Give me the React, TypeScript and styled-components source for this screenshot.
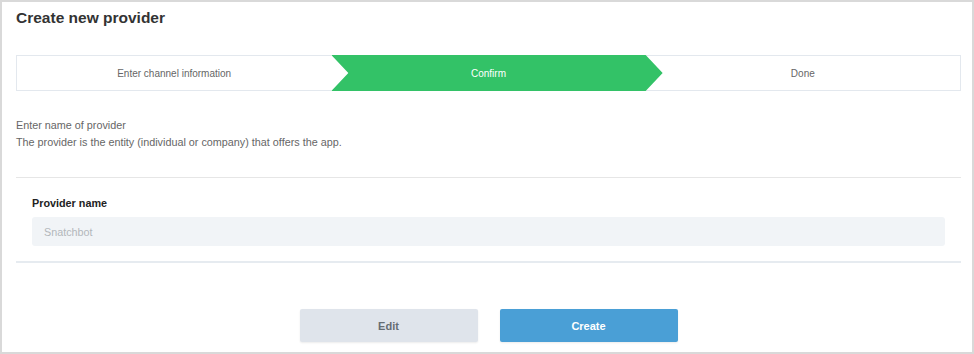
import React from "react";
import styled, { createGlobalStyle } from "styled-components";

const GlobalStyle = createGlobalStyle`
  html, body {
    margin: 0;
    padding: 0;
    background: #ffffff;
  }
  body {
    font-family: "Liberation Sans", Arial, sans-serif;
  }
`;

const steps = ["Enter channel information", "Confirm", "Done"];

const App = () => {
  return (
    <>
      <GlobalStyle />
      <Frame>
        <Title>Create new provider</Title>

        <Stepper>
          {steps.map((label, i) => (
            <Step
              key={label}
              $active={i === 1}
              $first={i === 0}
              $last={i === steps.length - 1}
            >
              {label}
            </Step>
          ))}
        </Stepper>

        <Intro>
          <p>Enter name of provider</p>
          <p>The provider is the entity (individual or company) that offers the app.</p>
        </Intro>

        <FieldSection>
          <Label htmlFor="provider-name">Provider name</Label>
          <Input id="provider-name" placeholder="Snatchbot" readOnly />
        </FieldSection>

        <Actions>
          <Button $variant="secondary">Edit</Button>
          <Button $variant="primary">Create</Button>
        </Actions>
      </Frame>
    </>
  );
};

export default App;

const Frame = styled.div`
  box-sizing: border-box;
  width: 974px;
  height: 354px;
  overflow: hidden;
  border: 2px solid #d9d9d9;
  padding: 6px 11px 0 14px;
  background: #fff;
`;

const Title = styled.h1`
  margin: 0;
  font-size: 15.5px;
  line-height: 20px;
  font-weight: 700;
  color: #333;
`;

const Stepper = styled.div`
  display: flex;
  height: 36px;
  margin-top: 27px;
`;

const ARROW = 17;

const Step = styled.div<{ $active: boolean; $first: boolean; $last: boolean }>`
  flex: 1 1 0;
  display: flex;
  align-items: center;
  justify-content: center;
  font-size: 10px;
  color: ${(p) => (p.$active ? "#fff" : "#666")};
  box-sizing: border-box;
  border-top: ${(p) => (p.$active ? "none" : "1px solid #e3e8ee")};
  border-bottom: ${(p) => (p.$active ? "none" : "1px solid #e3e8ee")};
  border-left: ${(p) => (p.$first ? "1px solid #e3e8ee" : "none")};
  border-right: ${(p) => (p.$last ? "1px solid #e3e8ee" : "none")};
  background: ${(p) => (p.$active ? "#33c267" : "#fff")};
  position: relative;
  z-index: ${(p) => (p.$active ? 1 : 0)};
  ${(p) =>
    p.$active &&
    `
    margin-right: -${ARROW}px;
    padding-right: ${ARROW}px;
    clip-path: polygon(0 0, calc(100% - ${ARROW}px) 0, 100% 50%, calc(100% - ${ARROW}px) 100%, 0 100%, ${ARROW}px 50%);
  `}
`;

const Intro = styled.div`
  margin-top: 26px;
  padding-bottom: 26px;
  border-bottom: 1px solid #e6e6e6;
  font-size: 10.8px;
  line-height: 17px;
  color: #666;

  p {
    margin: 0;
  }
`;

const FieldSection = styled.div`
  padding: 17px 16px 15px 16px;
  border-bottom: 2px solid #e6ebf0;
  display: flex;
  flex-direction: column;
`;

const Label = styled.label`
  font-size: 10.8px;
  font-weight: 700;
  color: #222;
  line-height: 16px;
  margin-bottom: 6px;
`;

const Input = styled.input`
  box-sizing: border-box;
  height: 29px;
  border: none;
  border-radius: 3px;
  background: #f1f4f7;
  padding: 0 12px;
  font-family: inherit;
  font-size: 10.8px;
  color: #333;
  outline: none;

  &::placeholder {
    color: #b3b7bb;
  }
`;

const Actions = styled.div`
  display: flex;
  justify-content: center;
  gap: 22px;
  margin-top: 46px;
`;

const Button = styled.button<{ $variant: "primary" | "secondary" }>`
  width: 178px;
  height: 33px;
  border: none;
  border-radius: 2px;
  font-family: inherit;
  font-size: 11px;
  font-weight: 700;
  cursor: pointer;
  background: ${(p) => (p.$variant === "primary" ? "#4a9fd6" : "#dfe4eb")};
  color: ${(p) => (p.$variant === "primary" ? "#fff" : "#666d73")};
  box-shadow: 0 1px 2px rgba(0, 0, 0, 0.08);
`;
